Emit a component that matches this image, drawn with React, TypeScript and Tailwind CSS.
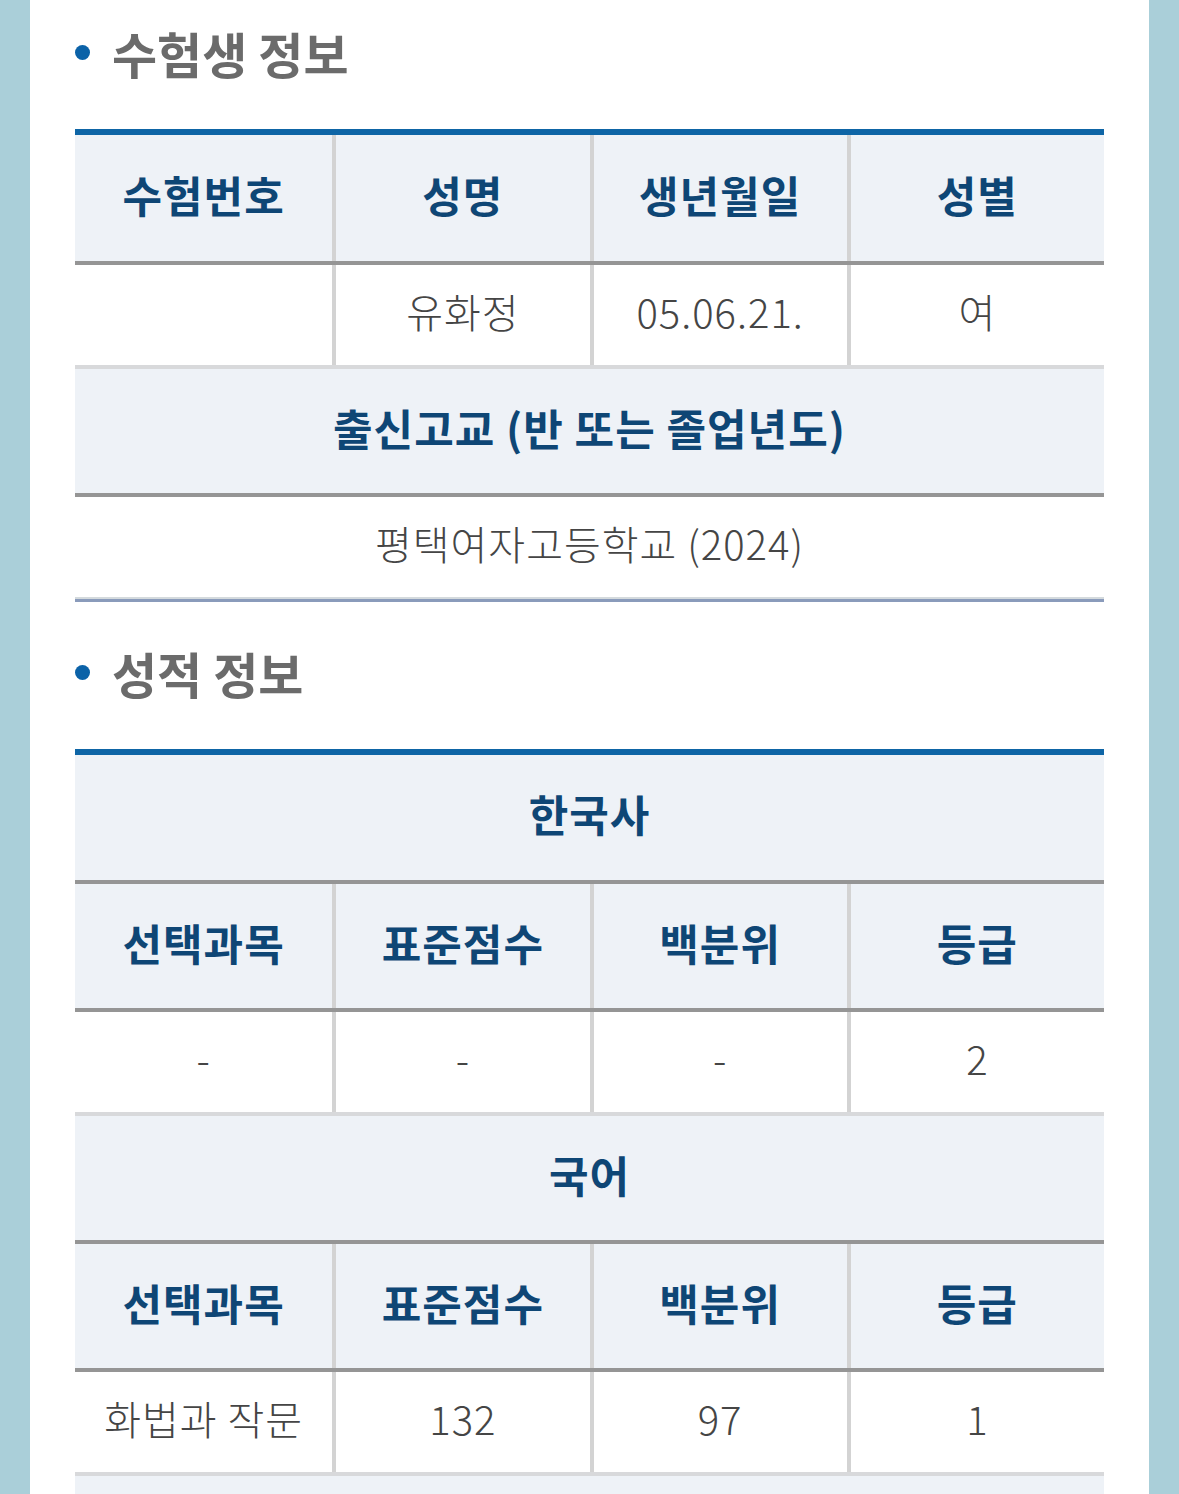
import React from "react";

const KR = "font-['Noto_Sans_CJK_KR','Noto_Sans',sans-serif]";
const HEAD = `${KR} text-[43px] font-bold text-[#0e4675] tracking-[1px]`;
const DATA = `${KR} text-[40px] font-light text-[#454545] tracking-[1px]`;

function Title({ text, first }: { text: string; first?: boolean }) {
  return (
    <div className={`flex items-center pb-[6px] ${first ? "h-[110px] mb-[19px]" : "h-[147px]"}`}>
      <span className="w-[15px] h-[15px] rounded-full bg-[#0b62a8] mr-[22px]" />
      <span className={`${KR} text-[49px] font-bold text-[#6b6b6b] leading-none`}>{text}</span>
    </div>
  );
}

function HeadRow({ cells, h = "h-[124px]" }: { cells: string[]; h?: string }) {
  return (
    <div className="grid grid-cols-4 border-b-4 border-[#959595] bg-[#eef2f7]">
      {cells.map((c, i) => (
        <div
          key={i}
          className={`${h} pb-[8px] flex items-center justify-center ${i > 0 ? "border-l-4 border-[#d3d3d3]" : ""}`}
        >
          <span className={HEAD}>{c}</span>
        </div>
      ))}
    </div>
  );
}

function FullHead({ text, h = "h-[128px]" }: { text: string; h?: string }) {
  return (
    <div className={`${h} pb-[8px] flex items-center justify-center border-b-4 border-[#959595] bg-[#eef2f7]`}>
      <span className={HEAD}>{text}</span>
    </div>
  );
}

function DataRow({ cells }: { cells: string[] }) {
  return (
    <div className="grid grid-cols-4 border-b-4 border-[#d8d9db] bg-white">
      {cells.map((c, i) => (
        <div
          key={i}
          className={`h-[100px] pb-[9px] flex items-center justify-center ${i > 0 ? "border-l-4 border-[#d3d3d3]" : ""}`}
        >
          <span className={DATA}>{c}</span>
        </div>
      ))}
    </div>
  );
}

export default function App() {
  return (
    <div className="w-[1179px] h-[1494px] overflow-hidden bg-[#aacfd9] px-[30px]">
      <div className="bg-white h-full px-[45px]">
        <Title text="수험생 정보" first />
        <div className="border-t-[6px] border-[#0e65a6]">
          <HeadRow cells={["수험번호", "성명", "생년월일", "성별"]} h="h-[126px]" />
          <DataRow cells={["", "유화정", "05.06.21.", "여"]} />
          <FullHead text="출신고교 (반 또는 졸업년도)" h="h-[128px]" />
          <div className="h-[102px] pb-[9px] flex items-center justify-center bg-white border-b-2 border-[#d4dadd]">
            <span className={DATA}>평택여자고등학교 (2024)</span>
          </div>
          <div className="h-[3px] bg-[#8a9bbb]" />
        </div>

        <Title text="성적 정보" />
        <div className="border-t-[6px] border-[#0e65a6]">
          <FullHead text="한국사" h="h-[129px]" />
          <HeadRow cells={["선택과목", "표준점수", "백분위", "등급"]} />
          <DataRow cells={["-", "-", "-", "2"]} />
          <FullHead text="국어" />
          <HeadRow cells={["선택과목", "표준점수", "백분위", "등급"]} />
          <DataRow cells={["화법과 작문", "132", "97", "1"]} />
          <div className="h-[125px] bg-[#eef2f7]" />
        </div>
      </div>
    </div>
  );
}
